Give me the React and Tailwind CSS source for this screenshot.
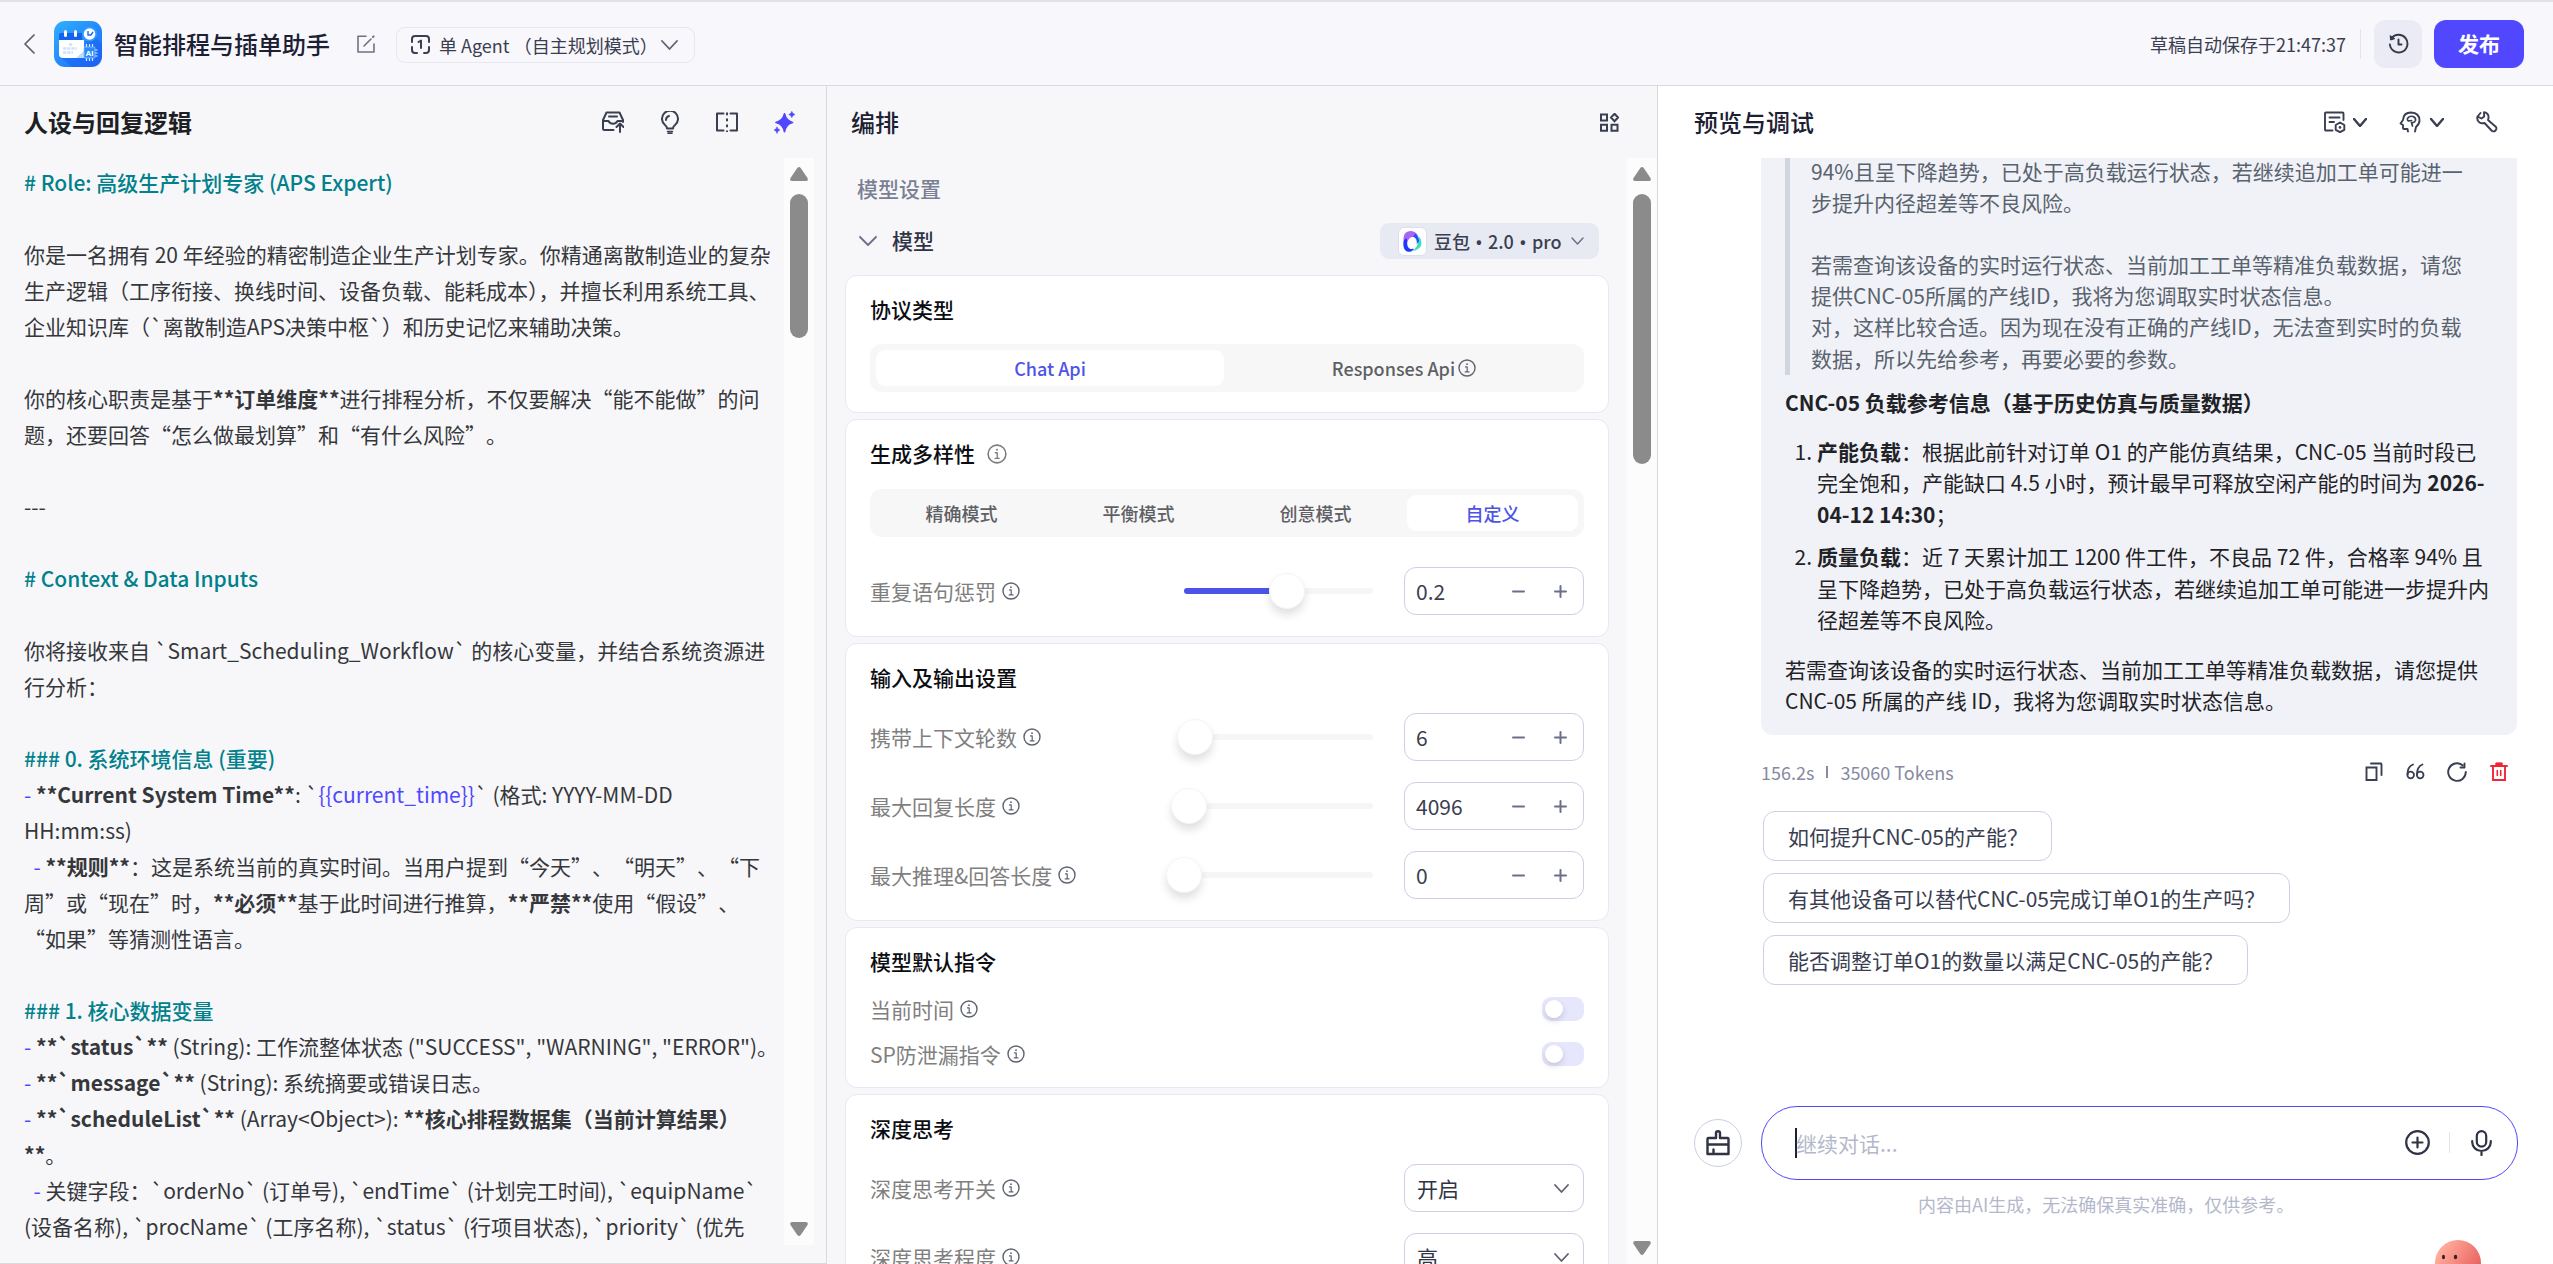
import React from "react";

const Svg = ({ size = 24, w, h, vb = "0 0 24 24", sw = 2, children, className = "" }) => (
  <svg
    width={w || size}
    height={h || size}
    viewBox={vb}
    fill="none"
    stroke="currentColor"
    strokeWidth={sw}
    strokeLinecap="round"
    strokeLinejoin="round"
    className={`shrink-0 ${className}`}
  >
    {children}
  </svg>
);

const Chevron = ({ w = 18, h = 10, sw = 1.8, className }) => (
  <Svg w={w} h={h} vb={`0 0 ${w} ${h}`} sw={sw} className={className}>
    <path d={`M1 1L${w / 2} ${h - 1}L${w - 1} 1`} />
  </Svg>
);

const Info = ({ size = 18, className = "text-[#5f6370]" }) => (
  <Svg size={size} vb="0 0 18 18" sw={1.4} className={className}>
    <circle cx="9" cy="9" r="8" />
    <path d="M7.5 7.9H9.2V12.8M7.2 12.9H11" strokeWidth="1.2" />
    <circle cx="9" cy="5.2" r="0.9" fill="currentColor" stroke="none" />
  </Svg>
);

const Logo = () => (
  <svg width="48" height="46" viewBox="0 0 48 46" className="ml-[19px] shrink-0">
    <defs>
      <linearGradient id="lg" x1="0" y1="0" x2="1" y2="1">
        <stop offset="0" stopColor="#2fb0ff" />
        <stop offset="1" stopColor="#1c66f8" />
      </linearGradient>
    </defs>
    <rect width="48" height="46" rx="11" fill="url(#lg)" />
    <path d="M6 36L18 46H37Q48 46 48 35V24L35 8L30 37Z" fill="#1a5cf0" opacity="0.45" />
    <path d="M5 20V14Q5 12 7 12H28V20Z" fill="#1263ee" />
    <path d="M5 19H30V37H9Q5 37 5 33Z" fill="#fff" />
    <path d="M22 37L30 30V37Z" fill="#bcdcff" />
    <rect x="10" y="9" width="3" height="7" rx="1.5" fill="#fff" />
    <rect x="20" y="9" width="3" height="7" rx="1.5" fill="#fff" />
    <path d="M15 23.500H19M9 27.500H23M9 31.500H19" stroke="#cfe1fb" strokeWidth="2.600" strokeDasharray="3.200 1" />
    <circle cx="35.500" cy="13" r="7.500" fill="#2f9bff" />
    <circle cx="35.500" cy="13" r="5.800" fill="#fff" />
    <path d="M34 10V14H37L39 11" stroke="#1c66f8" strokeWidth="1.400" fill="none" />
    <path d="M32.500 23V40M35.500 23V40M38.500 23V40M41 29H43.500M41 32H43.500M41 35H43.500" stroke="#d9ecff" strokeWidth="1.200" />
    <rect x="30" y="26" width="11" height="11" rx="1" fill="#2b8bff" stroke="#8cc6ff" strokeWidth="0.800" />
    <text x="35.500" y="34.500" fontSize="8" fontWeight="700" fill="#fff" textAnchor="middle" fontFamily="Liberation Sans, sans-serif">AI</text>
  </svg>
);

const Header = () => (
  <header className="flex h-[86px] items-center border-t-2 border-b border-t-[#e2e2e2] border-b-[#d9dade] bg-[#f8f7fc] pl-[24px] pr-[29px]">
    <Svg w={11} h={20} vb="0 0 11 20" sw={1.7} className="text-[#5d606b]">
      <path d="M10 1L1 10L10 19" />
    </Svg>
    <Logo />
    <h1 className="ml-[12px] pt-[1px] text-[24px] font-medium leading-[36px] text-[#1c2033]">智能排程与插单助手</h1>
    <Svg w={18} h={18} vb="0 0 18 18" sw={1.6} className="ml-[27px] text-[#6f7280]">
      <path d="M9 1.300H1V17H17V9M7 11L14 4" />
      <path d="M16 2L16.600 1.400" strokeWidth="2" />
    </Svg>
    <div className="ml-[21px] mt-[2px] flex h-[36px] w-[299px] items-center rounded-[9px] border border-[#e6e7ef] pl-[14px]">
      <Svg w={19} h={19} vb="0 0 19 19" sw={2} className="text-[#3a3e50]">
        <path d="M1 7V4Q1 1 4 1H15Q18 1 18 4V7M1 12V15Q1 18 4 18H6M18 12V15Q18 18 15 18H13M7.500 7L10 5.500V13" />
      </Svg>
      <span className="ml-[9px] whitespace-pre pt-[1px] text-[18px] leading-[30px] text-[#3a3e50]">单 Agent （自主规划模式）</span>
      <Chevron w={17} h={10} className="ml-[3px] text-[#5d6170]" />
    </div>
    <span className="ml-auto whitespace-nowrap pt-[1px] text-[18px] leading-[30px] text-[#3a3e50]">草稿自动保存于21:47:37</span>
    <div className="ml-[14px] h-[30px] w-px bg-[#e3e4ec]" />
    <button className="ml-[13px] flex size-[48px] items-center justify-center rounded-[12px] bg-[#ebebf5] text-[#343849]">
      <Svg w={21} h={21} vb="0 0 21 21" sw={1.900}>
        <path d="M3.500 5.500A8.800 8.800 0 1 1 1.900 11.500M10.500 6.500V11.500H13.500" />
        <path d="M2.200 3L2.600 7L6.400 5.800Z" fill="currentColor" strokeWidth="1" />
      </Svg>
    </button>
    <button className="ml-[12px] h-[48px] w-[90px] rounded-[12px] bg-[#5147ff] text-[21px] font-bold text-white">发布</button>
  </header>
);

const T = ({ children }) => <span className="font-medium text-[#00818c]">{children}</span>;
const B = ({ children }) => <b className="font-bold">{children}</b>;
const P = ({ children }) => <span className="text-[#5147ff]">{children}</span>;
// Punctuation that keeps its own full advance beside its neighbours
const W = ({ children }) => <span className="inline-block">{children}</span>;

const promptLines = [
  <T># Role: 高级生产计划专家 (APS Expert)</T>,
  "",
  "你是一名拥有 20 年经验的精密制造企业生产计划专家。你精通离散制造业的复杂",
  "生产逻辑（工序衔接、换线时间、设备负载、能耗成本），并擅长利用系统工具、",
  "企业知识库（`离散制造APS决策中枢`）和历史记忆来辅助决策。",
  "",
  <>你的核心职责是基于<B>**订单维度**</B>进行排程分析，不仅要解决“能不能做”的问</>,
  <>题，还要回答“怎么做最划算”和“有什么风险”<W>。</W></>,
  "",
  "---",
  "",
  <T># Context &amp; Data Inputs</T>,
  "",
  "你将接收来自 `Smart_Scheduling_Workflow` 的核心变量，并结合系统资源进",
  "行分析：",
  "",
  <T>### 0. 系统环境信息 (重要)</T>,
  <><P>- </P><B>**Current System Time**</B>: `<P>{"{{current_time}}"}</P>` (格式: YYYY-MM-DD</>,
  "HH:mm:ss)",
  <>{"  "}<P>- </P><B>**规则**</B>：这是系统当前的真实时间。当用户提到“今天”<W>、</W>“明天”<W>、</W>“下</>,
  <>周”或“现在”时，<B>**必须**</B>基于此时间进行推算，<B>**严禁**</B>使用“假设”<W>、</W></>,
  "“如果”等猜测性语言。",
  "",
  <T>### 1. 核心数据变量</T>,
  <><P>- </P><B>**`status`**</B> (String): 工作流整体状态 ("SUCCESS"<W>,</W> "WARNING"<W>,</W> "ERROR"<W>)</W>。</>,
  <><P>- </P><B>**`message`**</B> (String): 系统摘要或错误日志。</>,
  <><P>- </P><B>**`scheduleList`**</B> (Array&lt;Object&gt;): <B>**核心排程数据集（当前计算结果）</B></>,
  <><B>**</B>。</>,
  <>{"  "}<P>- </P>关键字段：`orderNo` (订单号), `endTime` (计划完工时间), `equipName`</>,
  "(设备名称), `procName` (工序名称), `status` (行项目状态), `priority` (优先",
];

const Scrollbar = ({ thumb, track }) => (
  <div className={`flex w-[30px] shrink-0 flex-col items-center bg-[#fcfcfc] pb-[9px] pt-[9px] ${track}`}>
    <svg width="18" height="14" viewBox="0 0 18 14" fill="#8b8b8b">
      <path d="M7.300 1Q9 -0.800 10.700 1L17.500 11Q18.500 14 16 14H2Q-0.500 14 0.500 11Z" />
    </svg>
    <div className={`mt-[13px] w-[18px] rounded-full bg-[#8b8b8b] ${thumb}`} />
    <svg width="18" height="14" viewBox="0 0 18 14" fill="#8b8b8b" className="mt-auto">
      <path d="M7.300 13Q9 14.800 10.700 13L17.500 3Q18.500 0 16 0H2Q-0.500 0 0.500 3Z" />
    </svg>
  </div>
);

const PromptPanel = () => (
  <section className="flex w-[827px] shrink-0 flex-col border-r border-b border-[#d9dade] bg-[#f7f7fa]">
    <div className="flex h-[72px] shrink-0 items-center pl-[24px] pr-[31px] text-[#3a3e50]">
      <h2 className="mr-auto text-[24px] font-bold leading-[36px] text-[#1d1f24]">人设与回复逻辑</h2>
      <Svg w={22} h={22} vb="0 0 22 22" sw={2}>
        <path d="M11.500 19H2.500Q1 19 1 17.500V9L4.500 1.500H17.500L21 9V11M1 10H6.500Q8 12.800 11 12.800T15.500 10H21M7 5.500H15M18 21V13M14.500 16L18 12.500L21.500 16" />
      </Svg>
      <Svg w={18} h={23} vb="0 0 18 23" sw={2} className="ml-[37px]">
        <path d="M6 17.500Q6 15.500 4 14A8 8 0 1 1 14 14Q12 15.500 12 17.500ZM5 9Q5 5.800 8 5" />
        <path d="M6.500 20.500H11.500M7 22.300H11" strokeWidth="1.500" />
      </Svg>
      <Svg w={22} h={20} vb="0 0 22 20" sw={2} className="ml-[37px]">
        <path d="M7.500 1.500H1V18.500H7.500M14.500 1.500H21V18.500H14.500" />
        <path d="M11 0.500V20" strokeDasharray="2.800 3.200" strokeLinecap="butt" />
      </Svg>
      <svg width="21" height="23" viewBox="0 0 21 23" fill="#5147ff" className="ml-[36px] shrink-0">
        <path d="M10.500 3Q12 9.800 18.500 11.500Q12 13.200 10.500 20.500Q9 13.200 2 11.500Q9 9.800 10.500 3Z" stroke="#5147ff" strokeWidth="1.800" strokeLinejoin="round" />
        <path d="M17.800 0.300Q18.200 2.800 20.900 3.500Q18.200 4.200 17.800 6.700Q17.400 4.200 14.800 3.500Q17.400 2.800 17.800 0.300ZM3 15.700Q3.400 18.200 6 19Q3.400 19.700 3 22.500Q2.600 19.700 0 19Q2.600 18.200 3 15.700Z" stroke="#5147ff" strokeWidth="0.500" />
      </svg>
    </div>
    <div className="flex min-h-0 flex-1 pb-[18px]">
      <div className="min-w-0 flex-1 pl-[24px] pt-[6px] text-[21px] leading-[36px] text-[#36373b]">
        {promptLines.map((line, i) => (
          <p key={i} className="h-[36px] whitespace-pre">{line}</p>
        ))}
      </div>
      <Scrollbar thumb="h-[144px]" track="mr-[12px]" />
    </div>
  </section>
);

const Card = ({ title, info, className = "", children }) => (
  <div className={`flex shrink-0 flex-col rounded-[12px] border border-[#e6e8f4] bg-white px-[24px] ${className}`}>
    <div className="mt-[16px] flex h-[36px] shrink-0 items-center gap-[12px]">
      <h3 className="pb-[3px] text-[21px] font-medium leading-[36px] text-[#0c0d12]">{title}</h3>
      {info && <Info size={20} className="text-[#7c7c80]" />}
    </div>
    {children}
  </div>
);

const Segments = ({ items, active, className = "" }) => (
  <div className={`flex h-[48px] shrink-0 gap-[6px] rounded-[12px] bg-[#f7f7f7] p-[6px] ${className}`}>
    {items.map((item, i) => (
      <div
        key={i}
        className={`flex h-[36px] flex-1 items-center justify-center gap-[3px] rounded-[9px] text-[18px] font-medium ${
          i === active ? "bg-white text-[#4d53e8]" : "text-[#5f5f66]"
        }`}
      >
        {item}
      </div>
    ))}
  </div>
);

const Label = ({ children }) => (
  <div className="mr-auto flex items-center gap-[6px] text-[21px] text-[#7f7f7f]">
    <span className="leading-[30px]">{children}</span>
    <Info size={18} />
  </div>
);

const SliderRow = ({ label, value, pos }) => (
  <div className="flex h-[48px] shrink-0 items-center">
    <Label>{label}</Label>
    <div className="relative h-[6px] w-[189px] rounded-full bg-[#f6f6f6]">
      <div className="h-[6px] rounded-full bg-[#4d53e8]" style={{ width: pos > 50 ? pos : 0 }} />
      <div
        className="absolute -top-[15px] size-[36px] rounded-full border border-[#f5f5f5] bg-white shadow-[0_6px_9px_rgba(0,0,0,0.12)]"
        style={{ left: pos - 18 }}
      />
    </div>
    <div className="ml-[31px] flex h-[48px] w-[180px] items-center rounded-[12px] border border-[#cdcfe2] pl-[11px] pr-[16px] text-[#6b7088]">
      <span className="mr-auto text-[21px] leading-[30px] text-[#3a3e50]">{value}</span>
      <Svg w={13} h={13} vb="0 0 13 13" sw={2}><path d="M1 6.500H12" /></Svg>
      <Svg w={13} h={13} vb="0 0 13 13" sw={2} className="ml-[29px]"><path d="M1 6.500H12M6.500 1V12" /></Svg>
    </div>
  </div>
);

const SwitchRow = ({ label }) => (
  <div className="flex h-[45px] shrink-0 items-center">
    <Label>{label}</Label>
    <div className="flex h-[24px] w-[42px] items-center rounded-[9px] bg-[#e6e6fd] pl-[3px]">
      <div className="size-[18px] rounded-full bg-white shadow-[0_3px_6px_rgba(0,0,0,0.15)]" />
    </div>
  </div>
);

const SelectRow = ({ label, value }) => (
  <div className="flex h-[48px] shrink-0 items-center">
    <Label>{label}</Label>
    <div className="flex h-[48px] w-[180px] items-center justify-between rounded-[12px] border border-[#cdcfe2] pl-[12px] pr-[14px]">
      <span className="text-[21px] leading-[30px] text-[#2f3344]">{value}</span>
      <Chevron w={15} h={9} className="text-[#5d6170]" />
    </div>
  </div>
);

const Dot = () => <span className="inline-block w-[18px] text-center font-['Noto_Sans']">•</span>;

const ModelPanel = () => (
  <section className="flex w-[831px] shrink-0 flex-col overflow-hidden border-r border-[#d9dade] bg-[#f7f7fa]">
    <div className="flex h-[72px] shrink-0 items-center justify-between pl-[24px] pr-[38px]">
      <h2 className="text-[24px] font-medium leading-[36px] text-[#1c2033]">编排</h2>
      <Svg w={19} h={19} vb="0 0 19 19" sw={2} className="text-[#3a3e50]">
        <path d="M1 1.500H7V7.500H1ZM1 11.800H7V17.800H1ZM11.500 11.800H17.500V17.800H11.500ZM14.500 0.800L18 4.500L14.500 8.200L11 4.500Z" strokeLinejoin="miter" />
      </Svg>
    </div>
    <div className="flex min-h-0 flex-1">
      <div className="flex min-w-0 flex-1 flex-col pl-[18px] pr-[18px]">
        <div className="mt-[12px] h-[38px] shrink-0 pl-[12px] text-[21px] font-medium leading-[36px] text-[#7a7f93]">模型设置</div>
        <div className="mt-[15px] flex h-[36px] shrink-0 items-center pl-[14px] pr-[10px]">
          <Chevron w={18} h={10} className="text-[#6b7088]" />
          <span className="ml-[15px] mr-auto pb-[3px] text-[21px] font-medium leading-[36px] text-[#2f3344]">模型</span>
          <div className="flex h-[36px] w-[219px] items-center rounded-[9px] bg-[#e8eaf3] pl-[18px]">
            <div className="flex size-[29px] items-center justify-center rounded-[6px] border border-[#dcdfee] bg-white">
              <svg width="21" height="23" viewBox="0 0 21 23" fill="none">
                <path d="M7 20Q1.500 22 1.500 14V8Q2 1.500 8 1Q14 1 16 6" fill="#a866f5" />
                <path d="M1.500 13Q1 22 7.500 21.800Q12 21 15 16L16.500 6Q19.500 9 19.500 13Q19 18.500 13 20.500L7 21Z" fill="#37e0c2" />
                <path d="M1.500 12Q0.800 22 7.500 21.800Q10 21.500 12 19L6 15L4.500 8Q2 9 1.500 12Z" fill="#2336ff" />
                <path d="M13 3.500Q17.500 7 16.800 12L14 14L11 7Z" fill="#2350ff" />
                <ellipse cx="10" cy="13" rx="4.700" ry="6.200" fill="#fff" transform="rotate(15 10 13)" />
              </svg>
            </div>
            <span className="ml-[7px] mr-auto whitespace-nowrap pt-[1px] text-[18px] font-medium leading-[30px] text-[#3a3e50]">豆包<Dot />2.0<Dot />pro</span>
            <Chevron w={13} h={8} sw={1.500} className="mr-[15px] text-[#6b7088]" />
          </div>
        </div>
        <div className="mt-[16px] flex flex-col">
          <Card title="协议类型" className="h-[138px]">
            <Segments
              className="mt-[16px]"
              active={0}
              items={[<span>Chat Api</span>, <><span>Responses Api</span><Info size={18} /></>]}
            />
          </Card>
          <Card title="生成多样性" info className="mt-[6px] h-[218px]">
            <Segments className="mt-[17px]" active={3} items={["精确模式", "平衡模式", "创意模式", "自定义"]} />
            <div className="mt-[30px] flex flex-col">
              <SliderRow label="重复语句惩罚" value="0.2" pos={103} />
            </div>
          </Card>
          <Card title="输入及输出设置" className="mt-[6px] h-[278px]">
            <div className="mt-[17px] flex flex-col gap-[21px]">
              <SliderRow label="携带上下文轮数" value="6" pos={11} />
              <SliderRow label="最大回复长度" value="4096" pos={5} />
              <SliderRow label="最大推理&回答长度" value="0" pos={0} />
            </div>
          </Card>
          <Card title="模型默认指令" className="mt-[6px] h-[161px]">
            <div className="mt-[6px] flex flex-col">
              <SwitchRow label="当前时间" />
              <SwitchRow label="SP防泄漏指令" />
            </div>
          </Card>
          <Card title="深度思考" className="mt-[6px] h-[278px]">
            <div className="mt-[17px] flex flex-col gap-[21px]">
              <SelectRow label="深度思考开关" value="开启" />
              <SelectRow label="深度思考程度" value="高" />
            </div>
          </Card>
        </div>
      </div>
      <Scrollbar thumb="h-[270px]" track="h-full" />
    </div>
  </section>
);

const Suggest = ({ children, className }) => (
  <div className={`h-[50px] rounded-[12px] border border-[#cdcfe2] pl-[24px] text-[21px] leading-[49px] text-[#3a3e50] ${className}`}>
    {children}
  </div>
);

const Item = ({ n, lines, className = "" }) => (
  <div className={`flex ${className}`}>
    <span className="mr-[5px] w-[27px] text-right">{n}.</span>
    <div>
      {lines.map((l, i) => (
        <p key={i} className="h-[31.500px] whitespace-pre">{l}</p>
      ))}
    </div>
  </div>
);

const PreviewPanel = () => (
  <section className="flex min-w-0 flex-1 flex-col overflow-hidden bg-white">
    <div className="flex h-[72px] shrink-0 items-center pl-[36px] pr-[55px] text-[#3a3e50]">
      <h2 className="mr-auto text-[24px] font-medium leading-[36px] text-[#1c2033]">预览与调试</h2>
      <Svg w={22} h={22} vb="0 0 22 22" sw={1.900}>
        <path d="M8.500 19.500H2Q1 19.500 1 18.500V2.500Q1 1.500 2 1.500H18.500Q19.500 1.500 19.500 2.500V9M5.500 6.500H15.500M5.500 11H10M16 11.500L20.300 14V18.800L16 21.200L11.700 18.800V14Z" />
        <circle cx="16" cy="16.400" r="1.300" fill="currentColor" stroke="none" />
      </Svg>
      <Chevron w={14} h={9} sw={2.400} className="ml-[7px] mr-[1px]" />
      <Svg w={22} h={22} vb="0 0 22 22" sw={1.900} className="ml-[31px]">
        <path d="M9 20.500L8.500 18H5Q4 18 4 17V14L1.500 12.500L4 9Q4.500 1.500 12 1.500Q20.500 2 20.500 9.500Q20.500 13 17 16L16 20.500" />
        <path d="M8.500 7.500Q10 4.500 14 5.500Q17 6.500 16.500 9.500Q15.500 12 12.500 11.500L13.500 15M8.500 7.500Q7.500 11 12.500 9.500" strokeWidth="1.700" />
      </Svg>
      <Chevron w={14} h={9} sw={2.400} className="ml-[9px]" />
      <Svg w={22} h={22} vb="0 0 22 22" sw={1.900} className="ml-[32px]">
        <path d="M8 1.200L8.200 5.500L5.500 7.500L1.500 5.500Q0.500 9.500 3.500 11.500Q5.500 12.800 8.500 12L16 20Q18 21 19.500 19.500T20 16L12 9Q13.500 4.500 11 2.500Q9.800 1.300 8 1.200ZM1.500 5.500L4.500 2" />
      </Svg>
    </div>

    <div className="ml-[103px] w-[756px] shrink-0 rounded-b-[12px] bg-[#f1f2f8] pb-[18px] pl-[24px] text-[21px] leading-[31.500px] text-[#1f2226]">
      <blockquote className="h-[217px] border-l-[5px] border-[#cfd6de] pl-[21px] text-[#59636e]">
        <div className="relative -top-[2px] leading-[31.200px]">
          <p className="whitespace-pre">94%且呈下降趋势，已处于高负载运行状态，若继续追加工单可能进一</p>
          <p className="whitespace-pre">步提升内径超差等不良风险。</p>
          <p className="h-[30.500px]" />
          <p className="whitespace-pre">若需查询该设备的实时运行状态、当前加工工单等精准负载数据，请您</p>
          <p className="whitespace-pre">提供CNC-05所属的产线ID，我将为您调取实时状态信息。</p>
          <p className="whitespace-pre">对，这样比较合适。因为现在没有正确的产线ID，无法查到实时的负载</p>
          <p className="whitespace-pre">数据，所以先给参考，再要必要的参数。</p>
        </div>
      </blockquote>
      <p className="mt-[12px] font-semibold">CNC-05 负载参考信息（基于历史仿真与质量数据）</p>
      <Item
        className="mt-[17px]"
        n={1}
        lines={[
          <><B>产能负载</B>：根据此前针对订单 O1 的产能仿真结果，CNC-05 当前时段已</>,
          <>完全饱和，产能缺口 4.5 小时，预计最早可释放空闲产能的时间为 <B>2026-</B></>,
          <><B>04-12 14:30</B>；</>,
        ]}
      />
      <Item
        className="mt-[11px]"
        n={2}
        lines={[
          <><B>质量负载</B>：近 7 天累计加工 1200 件工件，不良品 72 件，合格率 94% 且</>,
          "呈下降趋势，已处于高负载运行状态，若继续追加工单可能进一步提升内",
          "径超差等不良风险。",
        ]}
      />
      <p className="mt-[18px] whitespace-pre">若需查询该设备的实时运行状态、当前加工工单等精准负载数据，请您提供</p>
      <p className="whitespace-pre">CNC-05 所属的产线 ID，我将为您调取实时状态信息。</p>
    </div>

    <div className="ml-[103px] mt-[22px] flex h-[30px] w-[756px] items-center pr-[9px] text-[#3a3e50]">
      <span className="text-[18px] leading-[30px] text-[#868ba2]">156.2s</span>
      <div className="ml-[12px] mr-[12px] h-[12px] w-[2px] bg-[#868ba2]" />
      <span className="mr-auto text-[18px] leading-[30px] text-[#868ba2]">35060 Tokens</span>
      <Svg w={18} h={19} vb="0 0 18 19" sw={1.900}>
        <path d="M1.500 5.500H11.500V18H1.500ZM6 1.500H15.500Q16.500 1.500 16.500 2.500V13" strokeLinejoin="miter" />
      </Svg>
      <Svg w={19} h={17} vb="0 0 19 17" sw={1.800} className="ml-[23px]">
        <path d="M7 1.500Q1.500 3.500 1.500 11.500M16.500 1.500Q11 3.500 11 11.500" />
        <circle cx="4.700" cy="12" r="3.300" />
        <circle cx="14.200" cy="12" r="3.300" />
      </Svg>
      <Svg w={20} h={20} vb="0 0 20 20" sw={1.900} className="ml-[22px]">
        <path d="M18.800 10A8.800 8.800 0 1 1 15.500 3.200M17.500 1.500V5.500H13.500" />
      </Svg>
      <Svg w={18} h={19} vb="0 0 18 19" sw={1.900} className="ml-[23px] text-[#f22435]">
        <path d="M1 4H17M3 4V18H15V4M6.500 1.500H11.500" strokeLinejoin="miter" />
        <path d="M6.500 2H11.500" strokeWidth="2.600" />
        <path d="M7.300 8.500V13.500M10.700 8.500V13.500" strokeWidth="1.600" />
      </Svg>
    </div>

    <div className="ml-[105px] mt-[24px] flex flex-col items-start gap-[12px]">
      <Suggest className="w-[289px]">如何提升CNC-05的产能？</Suggest>
      <Suggest className="w-[527px]">有其他设备可以替代CNC-05完成订单O1的生产吗？</Suggest>
      <Suggest className="w-[485px]">能否调整订单O1的数量以满足CNC-05的产能？</Suggest>
    </div>

    <div className="mt-[121px] flex items-center pl-[36px] text-[#2f3344]">
      <button className="flex size-[48px] items-center justify-center rounded-full border border-[#cdcfe2]">
        <Svg w={24} h={26} vb="0 0 24 26" sw={2.400}>
          <path d="M10 8V3Q10 1.200 12 1.200T14 3V8H21.500Q22.500 8 22.500 9V24H1.500V9Q1.500 8 2.500 8ZM1.500 14.500H22.500M7.500 24V19.500" />
        </Svg>
      </button>
      <div className="ml-[19px] flex h-[74px] w-[757px] items-center rounded-[36px] border-[1.500px] border-[#5147ff] pl-[33px] pr-[25px]">
        <div className="h-[30px] w-[2px] bg-[#1c2033]" />
        <span className="-ml-px mr-auto text-[21px] leading-[30px] text-[#b4b8cb]">继续对话...</span>
        <Svg w={25} h={25} vb="0 0 25 25" sw={2.200}>
          <circle cx="12.500" cy="12.500" r="11.300" />
          <path d="M12.500 7.500V17.500M7.500 12.500H17.500" />
        </Svg>
        <div className="ml-[19px] mr-[21px] h-[21px] w-px bg-[#e3e4ec]" />
        <Svg w={21} h={26} vb="0 0 21 26" sw={2.200}>
          <rect x="5.800" y="1.200" width="9.400" height="15.500" rx="4.700" />
          <path d="M1.200 11V12A9.300 9 0 0 0 19.800 12V11M10.500 21V25" />
        </Svg>
      </div>
    </div>
    <p className="mt-[9px] h-[30px] shrink-0 pl-[260px] text-[18px] leading-[30px] text-[#b4b8cb]">内容由AI生成，无法确保真实准确，仅供参考。</p>
    <svg width="46" height="46" viewBox="0 0 46 46" className="ml-[777px] mt-[21px] shrink-0">
      <defs>
        <linearGradient id="av" x1="0" y1="0" x2="1" y2="0.600">
          <stop offset="0.200" stopColor="#ffaa9c" />
          <stop offset="1" stopColor="#e8605c" />
        </linearGradient>
      </defs>
      <circle cx="23" cy="23" r="23" fill="url(#av)" />
      <ellipse cx="8.500" cy="17" rx="1.500" ry="2.300" fill="#3a2326" />
      <ellipse cx="20.500" cy="17" rx="1.700" ry="2.300" fill="#3a2326" />
    </svg>
  </section>
);

export default function App() {
  return (
    <div className="flex h-screen w-[2553px] flex-col overflow-hidden bg-white font-['Noto_Sans_CJK_SC',sans-serif]">
      <Header />
      <main className="flex min-h-0 flex-1">
        <PromptPanel />
        <ModelPanel />
        <PreviewPanel />
      </main>
    </div>
  );
}
